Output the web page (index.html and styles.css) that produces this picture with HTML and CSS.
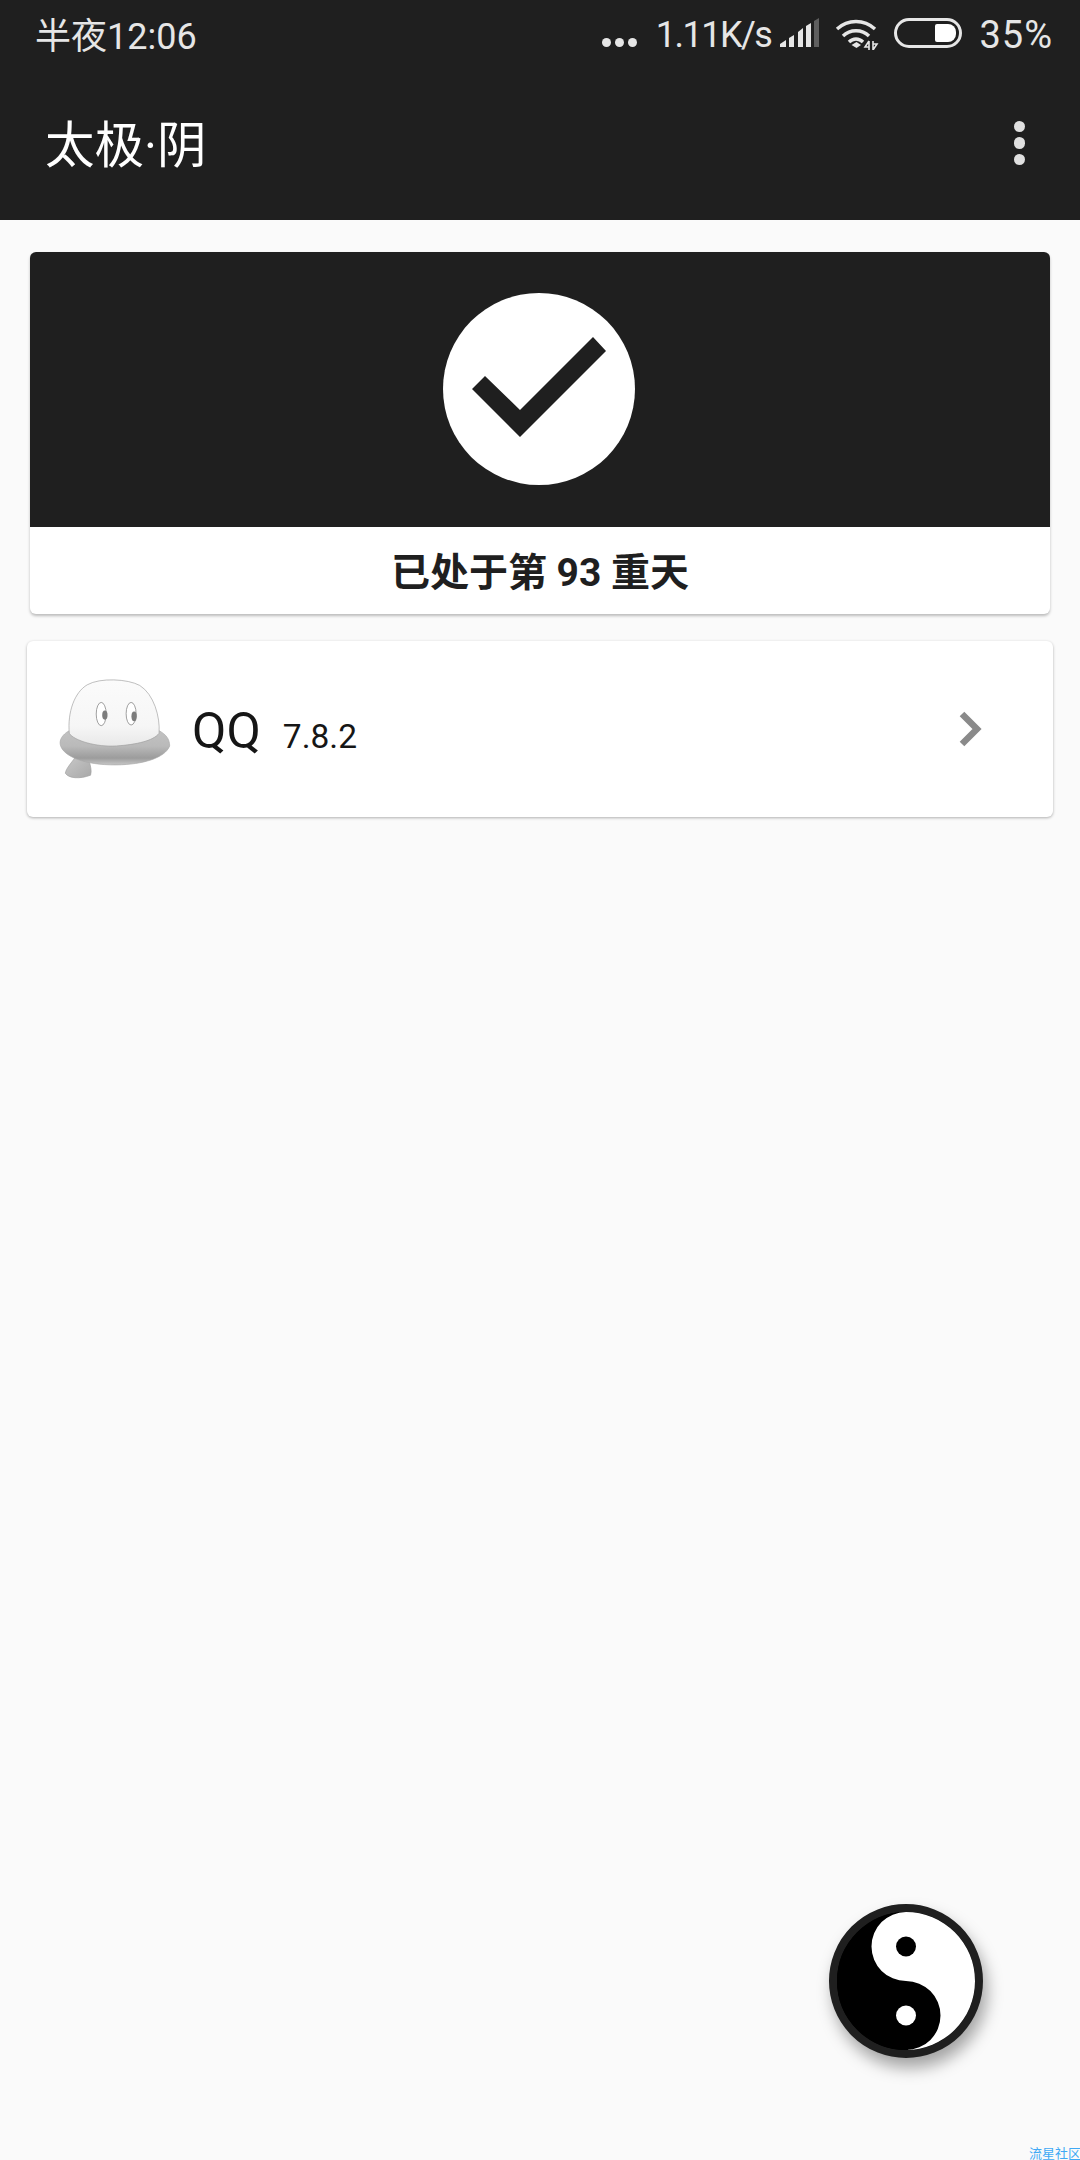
FILE: index.html
```html
<!DOCTYPE html>
<html lang="zh-CN">
<head>
  <meta charset="UTF-8" />
  <title>太极·阴</title>
  <meta name="viewport" content="width=device-width, initial-scale=1" />
  <link rel="stylesheet" href="styles.css">
</head>
<body>
  <header>
    <div class="status-bar">
      <span class="clock">半夜12:06</span>
      <div class="status-right">
        <span class="more-dots"><i></i><i></i><i></i></span>
        <span class="speed">1.11K/s</span>
        <svg class="signal" width="40" height="30" viewBox="0 0 40 30">
          <path d="M1 29V26L7 22V29Z" fill="#e6e6e6"/>
          <path d="M10 29V20L15 17V29Z" fill="#e6e6e6"/>
          <path d="M19 29V14L24 10V29Z" fill="#e6e6e6"/>
          <path d="M27 29V8L32 5V29Z" fill="#e6e6e6"/>
          <path d="M35 29V3L40 0V29Z" fill="#5f5f5f"/>
        </svg>
        <svg class="wifi" width="44" height="32" viewBox="0 0 44 32">
          <path d="M2 11C13 1 29 1 40 11" fill="none" stroke="#e6e6e6" stroke-width="3.4"/>
          <path d="M8 18C15 11 27 11 34 18" fill="none" stroke="#e6e6e6" stroke-width="3.4"/>
          <path d="M14 24C18 20 24 20 28 24" fill="none" stroke="#e6e6e6" stroke-width="3.4"/>
          <path d="M16.5 27L21.5 24L26 27L21.5 30Z" fill="#e6e6e6"/>
          <path d="M34 23V32M34 23L30 29H34M38 32V23M38 32L42 26H38" fill="none" stroke="#e6e6e6" stroke-width="1.6"/>
        </svg>
        <span class="battery"><i></i></span>
        <span class="percent">35%</span>
      </div>
    </div>
    <div class="toolbar">
      <h1>太极·阴</h1>
      <span class="menu-dots"><i></i><i></i><i></i></span>
    </div>
  </header>
  <main>
    <section class="status-card">
      <div class="status-banner">
        <svg width="192" height="192" viewBox="0 0 192 192">
          <circle cx="96" cy="96" r="96" fill="#fff"/>
          <path d="M29 96L42 83L77 117L150 44L163 58L77 144Z" fill="#1f1f1f"/>
        </svg>
      </div>
      <p class="status-text">已处于第 93 重天</p>
    </section>
    <section class="app-card">
      <svg class="app-logo" width="112" height="100" viewBox="177 177 337 300">
        <defs>
          <linearGradient id="dome" x1="0" y1="0" x2="0" y2="1">
            <stop offset="0" stop-color="#fbfbfb"/>
            <stop offset="0.7" stop-color="#f6f6f6"/>
            <stop offset="1" stop-color="#e8e8e8"/>
          </linearGradient>
          <linearGradient id="ring" x1="0" y1="0" x2="0" y2="1">
            <stop offset="0" stop-color="#c2c2c2"/>
            <stop offset="0.45" stop-color="#bababa"/>
            <stop offset="0.8" stop-color="#9c9c9c"/>
            <stop offset="1" stop-color="#c6c6c6"/>
          </linearGradient>
          <linearGradient id="stem" x1="0" y1="0" x2="1" y2="1">
            <stop offset="0" stop-color="#c8c8c8"/>
            <stop offset="1" stop-color="#a8a8a8"/>
          </linearGradient>
        </defs>
        <path d="M226 412C212 432 198 446 196 460C206 476 240 478 272 466C276 452 272 440 268 424Z" fill="url(#stem)" stroke="#a0a0a0" stroke-width="2"/>
        <path d="M208 332C186 344 176 362 182 378C192 408 250 436 350 435C430 434 496 414 510 378C510 358 500 344 478 332Z" fill="url(#ring)" stroke="#a8a8a8" stroke-width="2"/>
        <path d="M208 340C222 362 290 382 350 378C410 374 462 362 478 340C482 290 462 222 420 196C384 176 300 172 262 194C224 216 202 276 208 340Z" fill="url(#dome)" stroke="#a0a0a0" stroke-width="2"/>
        <ellipse cx="304" cy="282" rx="15" ry="35" fill="#fff" stroke="#8c8c8c" stroke-width="2.5"/>
        <ellipse cx="315" cy="285" rx="8" ry="14" fill="#7c7c7c"/>
        <ellipse cx="394" cy="281" rx="15" ry="34" fill="#fff" stroke="#8c8c8c" stroke-width="2.5"/>
        <ellipse cx="403" cy="289" rx="8" ry="15" fill="#7c7c7c"/>
      </svg>
      <div class="app-title">
        <span class="app-name">QQ</span>
        <span class="app-version">7.8.2</span>
      </div>
      <svg class="chevron" width="24" height="36" viewBox="0 0 24 36">
        <path d="M3 3L18 18L3 33" fill="none" stroke="#8a8a8a" stroke-width="6.500"/>
      </svg>
    </section>
  </main>
  <button class="fab" type="button">
    <svg width="138" height="138" viewBox="0 0 138 138">
      <circle cx="69" cy="69" r="69" fill="#000"/>
      <path d="M69 0A69 69 0 0 1 69 138A34.500 34.500 0 0 0 69 69A34.500 34.500 0 0 1 69 0Z" fill="#fff"/>
      <circle cx="69" cy="34.500" r="10" fill="#000"/>
      <circle cx="69" cy="103.500" r="10" fill="#fff"/>
    </svg>
  </button>
  <span class="watermark">流星社区</span>
</body>
</html>
```

FILE: styles.css
```css
/* Reset and base */
*, *::before, *::after {
  box-sizing: border-box;
}

html, body {
  height: 2160px;
  overflow: hidden;
}

body {
  font-family: Roboto, 'Noto Sans CJK SC', sans-serif;
  background-color: #fafafa;
  color: #1f1f1f;
  margin: 0;
  padding: 0;
  position: relative;
}

header {
  background-color: #1f1f1f;
  height: 220px;
}

/* Status bar */
.status-bar {
  height: 70px;
  padding: 0 27px 0 35px;
  display: flex;
  justify-content: space-between;
  align-items: center;
  color: #e6e6e6;
  font-size: 37px;
}

.clock {
  font-size: 36px;
  margin-bottom: 5px;
}

.status-right {
  display: flex;
  align-items: center;
}

.more-dots {
  display: flex;
  gap: 4px;
  margin-top: 14px;
  margin-right: 19px;
}

.more-dots i {
  width: 9px;
  height: 9px;
  border-radius: 50%;
  background-color: #e6e6e6;
}

.speed {
  font-size: 36px;
  letter-spacing: -1.5px;
  margin-right: 8px;
}

.signal {
  margin-top: -4px;
  margin-right: 16px;
}

.wifi {
  margin-top: -2px;
  margin-right: 15px;
}

.battery {
  width: 68px;
  height: 30px;
  margin-top: -4px;
  margin-right: 17px;
  padding: 3px 3px;
  border: 3px solid #e6e6e6;
  border-radius: 15px;
  display: flex;
  justify-content: flex-end;
}

.battery i {
  width: 21px;
  height: 18px;
  background-color: #fff;
  border-radius: 2px 8px 8px 2px;
}

.percent {
  font-size: 38px;
  letter-spacing: 1px;
}

/* Toolbar */
.toolbar {
  height: 150px;
  padding: 0 55px 0 45px;
  display: flex;
  justify-content: space-between;
  align-items: center;
}

.toolbar h1 {
  margin: 0 0 8px;
  color: #fff;
  font-size: 49.500px;
  font-weight: 400;
}

.menu-dots {
  display: flex;
  flex-direction: column;
  gap: 5px;
  margin-bottom: 4px;
}

.menu-dots i {
  width: 11.500px;
  height: 11.500px;
  border-radius: 50%;
  background-color: #e0e0e0;
}

/* Cards */
main {
  padding-top: 32px;
}

.status-card {
  margin: 0 30px 27px;
  background-color: #fff;
  border-radius: 6px;
  overflow: hidden;
  box-shadow: 0 2px 3px rgba(0, 0, 0, 0.25);
}

.status-banner {
  height: 275px;
  padding: 0 2px 2px 0;
  background-color: #1f1f1f;
  display: flex;
  justify-content: center;
  align-items: center;
}

.status-text {
  margin: 0;
  height: 87px;
  padding-top: 6px;
  line-height: 81px;
  text-align: center;
  font-size: 39px;
  font-weight: 700;
}

.app-card {
  margin: 0 27px;
  height: 176px;
  padding-left: 32px;
  background-color: #fff;
  border-radius: 6px;
  box-shadow: 0 1px 3px rgba(0, 0, 0, 0.3);
  display: flex;
  align-items: center;
  color: #161616;
}

.app-title {
  display: flex;
  align-items: baseline;
  gap: 22px;
  margin-left: 21px;
  margin-top: 4px;
}

.app-name {
  font-size: 50px;
}

.app-version {
  font-size: 33.500px;
}

.chevron {
  margin-left: auto;
  margin-right: 70px;
}

/* Floating button */
.fab {
  position: absolute;
  left: 829px;
  top: 1904px;
  width: 154px;
  height: 154px;
  padding: 0;
  border: 8px solid #1f1f1f;
  border-radius: 50%;
  background-color: #000;
  box-shadow: 4px 10px 16px rgba(0, 0, 0, 0.35);
}

.fab svg {
  display: block;
}

.watermark {
  position: absolute;
  left: 1029px;
  top: 2146px;
  font-size: 13px;
  line-height: 16px;
  color: #3fa9f5;
  white-space: nowrap;
}
```
